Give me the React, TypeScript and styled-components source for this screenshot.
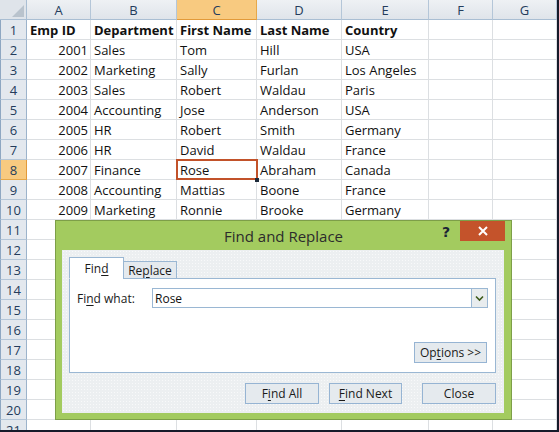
import React from "react";
import styled, { createGlobalStyle, css } from "styled-components";

const GlobalStyle = createGlobalStyle`
  html, body { margin: 0; padding: 0; background: #ffffff; overflow: hidden; }
  #root { width: 559px; height: 432px; }
`;

const FONT = `"Open Sans", "Liberation Sans", Arial, sans-serif`;

const Screen = styled.div`
  position: relative;
  width: 559px;
  height: 432px;
  box-sizing: border-box;
  border-right: 2px solid #161a2a;
  border-bottom: 2px solid #161a2a;
  overflow: hidden;
  background: #ffffff;
  font-family: ${FONT};
`;

const Sheet = styled.div`
  display: grid;
  grid-template-columns: 27px 64px 86px 80px 85px 87px 64px 64px;
  grid-auto-rows: 20px;
`;

const headerBase = css`
  box-sizing: border-box;
  display: flex;
  align-items: center;
  justify-content: center;
  font-size: 13px;
  color: #243c5c;
  border-right: 1px solid #a9bed3;
  border-bottom: 1px solid #a9bed3;
`;

const Corner = styled.div`
  ${headerBase};
  position: relative;
  background: #dfe4ea;
  &::after {
    content: "";
    position: absolute;
    right: 2px;
    bottom: 2px;
    width: 0;
    height: 0;
    border-left: 12px solid transparent;
    border-bottom: 12px solid #b9c3cd;
  }
`;

const ColHeader = styled.div<{ $sel?: boolean }>`
  ${headerBase};
  background: ${(p) => (p.$sel ? "#f8ca80" : "linear-gradient(#eef1f4, #dfe4ea)")};
  border-right-color: ${(p) => (p.$sel ? "#e6a84a" : "#b4c6d8")};
  border-bottom-color: ${(p) => (p.$sel ? "#e29a3a" : "#a9bed3")};
`;

const RowHeader = styled.div<{ $sel?: boolean }>`
  ${headerBase};
  background: ${(p) => (p.$sel ? "#f8ca80" : "#e3e8ee")};
  border-right-color: ${(p) => (p.$sel ? "#e29a3a" : "#9cb3cb")};
  border-bottom-color: ${(p) => (p.$sel ? "#e6a84a" : "#b4c6d8")};
  border-left: 1px solid #8ea7c2;
`;

const Cell = styled.div<{ $right?: boolean; $bold?: boolean; $active?: boolean }>`
  box-sizing: border-box;
  position: relative;
  display: flex;
  align-items: center;
  justify-content: ${(p) => (p.$right ? "flex-end" : "flex-start")};
  padding: 0 2px 0 3px;
  font-size: 13px;
  font-weight: ${(p) => (p.$bold ? 700 : 400)};
  color: #111111;
  white-space: nowrap;
  border-right: 1px solid #dcdfe2;
  border-bottom: 1px solid #dcdfe2;
  ${(p) =>
    p.$active &&
    css`
      &::after {
        content: "";
        position: absolute;
        left: -1px;
        top: -1px;
        right: -2px;
        bottom: -1px;
        border: 2px solid #c2522a;
      }
      &::before {
        content: "";
        position: absolute;
        right: -3px;
        bottom: -3px;
        width: 4px;
        height: 4px;
        background: #1d2a3a;
        z-index: 1;
      }
    `}
`;

/* Dialog */
const Dialog = styled.div`
  position: absolute;
  left: 55px;
  top: 220px;
  width: 457px;
  height: 200px;
  box-sizing: border-box;
  background: #a3cb5f;
  border: 1px solid #7d9f48;
  display: flex;
  flex-direction: column;
  padding: 0 7px 6px 6px;
`;

const TitleBar = styled.div`
  height: 29px;
  display: grid;
  grid-template-columns: 1fr auto 1fr;
  align-items: start;
  margin: 0 -1px 0 0;
`;

const Title = styled.div`
  grid-column: 2;
  font-size: 15px;
  color: #2c2c2c;
  line-height: 30px;
`;

const TitleControls = styled.div`
  grid-column: 3;
  justify-self: end;
  display: flex;
  align-items: flex-start;
  gap: 10px;
`;

const Help = styled.span`
  font-family: "DejaVu Sans", sans-serif;
  font-weight: 700;
  font-size: 14px;
  color: #1b2535;
  line-height: 20px;
  margin-top: 1px;
`;

const CloseBox = styled.div`
  width: 45px;
  height: 20px;
  background: #c4532b;
  display: flex;
  align-items: center;
  justify-content: center;
`;

const Body = styled.div`
  flex: 1;
  background: #eceff1;
  background-image: radial-gradient(#f8f9fa 0.6px, transparent 0.8px);
  background-size: 3px 3px;
  display: flex;
  flex-direction: column;
  padding: 8px 8px 9px 7px;
`;

const Tabs = styled.div`
  display: flex;
  align-items: flex-end;
  height: 21px;
  margin-bottom: -1px;
  position: relative;
  z-index: 1;
`;

const Tab = styled.div<{ $active?: boolean; $w: number }>`
  box-sizing: border-box;
  width: ${(p) => p.$w}px;
  height: ${(p) => (p.$active ? 22 : 18)}px;
  border: 1px solid #9ab7d3;
  border-bottom: ${(p) => (p.$active ? "1px solid #ffffff" : "1px solid #9ab7d3")};
  background: ${(p) => (p.$active ? "#ffffff" : "#e5eaee")};
  display: flex;
  align-items: center;
  justify-content: center;
  font-size: 12px;
  color: #1a1a1a;
  padding-top: ${(p) => (p.$active ? 1 : 0)}px;
  margin-left: ${(p) => (p.$active ? 0 : -1)}px;
`;

const Panel = styled.div`
  box-sizing: border-box;
  height: 95px;
  background: #ffffff;
  border: 1px solid #9ab7d3;
  display: flex;
  flex-direction: column;
  padding: 9px 7px 9px 7px;
`;

const FieldRow = styled.div`
  display: flex;
  align-items: center;
`;

const Label = styled.span`
  font-size: 12px;
  color: #1a1a1a;
  width: 75px;
`;

const Combo = styled.div`
  box-sizing: border-box;
  flex: 1;
  height: 20px;
  border: 1px solid #9ab7d3;
  display: flex;
  align-items: stretch;
  background: #fff;
`;

const ComboText = styled.div`
  flex: 1;
  font-size: 12px;
  color: #111;
  display: flex;
  align-items: center;
  padding-left: 2px;
`;

const ComboButton = styled.div`
  width: 16px;
  box-sizing: border-box;
  border-left: 1px solid #9ab7d3;
  background: #e8ecee;
  display: flex;
  align-items: center;
  justify-content: center;
`;

const OptionsRow = styled.div`
  margin-top: auto;
  display: flex;
  justify-content: flex-end;
  padding-right: 1px;
`;

const Button = styled.div<{ $w: number }>`
  box-sizing: border-box;
  width: ${(p) => p.$w}px;
  height: 21px;
  border: 1px solid #96b4d3;
  background: #e5eaee;
  display: flex;
  align-items: center;
  justify-content: center;
  font-size: 12px;
  color: #1a1a1a;
`;

const ButtonRow = styled.div`
  margin-top: auto;
  display: flex;
  justify-content: flex-end;
  padding-right: 0;
`;

const Gap = styled.div<{ $w: number }>`
  width: ${(p) => p.$w}px;
`;

const U = styled.span`
  text-decoration: underline;
  text-underline-offset: 2px;
`;

const columns = ["A", "B", "C", "D", "E", "F", "G"];
const data: string[][] = [
  ["Emp ID", "Department", "First Name", "Last Name", "Country"],
  ["2001", "Sales", "Tom", "Hill", "USA"],
  ["2002", "Marketing", "Sally", "Furlan", "Los Angeles"],
  ["2003", "Sales", "Robert", "Waldau", "Paris"],
  ["2004", "Accounting", "Jose", "Anderson", "USA"],
  ["2005", "HR", "Robert", "Smith", "Germany"],
  ["2006", "HR", "David", "Waldau", "France"],
  ["2007", "Finance", "Rose", "Abraham", "Canada"],
  ["2008", "Accounting", "Mattias", "Boone", "France"],
  ["2009", "Marketing", "Ronnie", "Brooke", "Germany"],
];

export default function App() {
  const rows = Array.from({ length: 21 }, (_, i) => i + 1);
  return (
    <>
      <GlobalStyle />
      <Screen>
        <Sheet>
          <Corner />
          {columns.map((c) => (
            <ColHeader key={c} $sel={c === "C"}>
              {c}
            </ColHeader>
          ))}
          {rows.map((r) => {
            const rowData = data[r - 1] || [];
            return (
              <React.Fragment key={r}>
                <RowHeader $sel={r === 8}>{r}</RowHeader>
                {columns.map((c, ci) => (
                  <Cell
                    key={c}
                    $right={ci === 0 && r > 1}
                    $bold={r === 1}
                    $active={r === 8 && c === "C"}
                  >
                    {rowData[ci] || ""}
                  </Cell>
                ))}
              </React.Fragment>
            );
          })}
        </Sheet>

        <Dialog>
          <TitleBar>
            <Title>Find and Replace</Title>
            <TitleControls>
              <Help>?</Help>
              <CloseBox>
                <svg width="10" height="10" viewBox="0 0 10 10">
                  <path d="M1 1 L9 9 M9 1 L1 9" stroke="#ffffff" strokeWidth="2" />
                </svg>
              </CloseBox>
            </TitleControls>
          </TitleBar>
          <Body>
            <Tabs>
              <Tab $active $w={55}>
                Fin<U>d</U>
              </Tab>
              <Tab $w={54}>
                Re<U>p</U>lace
              </Tab>
            </Tabs>
            <Panel>
              <FieldRow>
                <Label>
                  Fi<U>n</U>d what:
                </Label>
                <Combo>
                  <ComboText>Rose</ComboText>
                  <ComboButton>
                    <svg width="9" height="7" viewBox="0 0 9 7">
                      <path d="M1 1.5 L4.5 5 L8 1.5" fill="none" stroke="#3d5a1a" strokeWidth="1.6" />
                    </svg>
                  </ComboButton>
                </Combo>
              </FieldRow>
              <OptionsRow>
                <Button $w={73}>
                  Op<U>t</U>ions &gt;&gt;
                </Button>
              </OptionsRow>
            </Panel>
            <ButtonRow>
              <Button $w={74}>
                F<U>i</U>nd All
              </Button>
              <Gap $w={10} />
              <Button $w={73}>
                <U>F</U>ind Next
              </Button>
              <Gap $w={20} />
              <Button $w={74}>Close</Button>
            </ButtonRow>
          </Body>
        </Dialog>
      </Screen>
    </>
  );
}
